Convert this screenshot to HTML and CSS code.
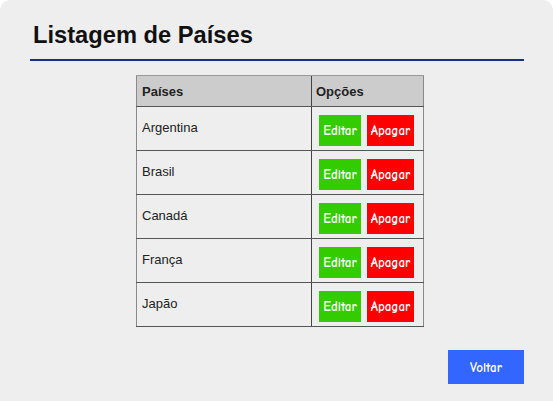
FILE: index.html
```html
<!DOCTYPE html>
<html lang="pt">
<head>
<meta charset="utf-8">
<title>Listagem de Países</title>
<link rel="stylesheet" href="styles.css">
</head>
<body>
<div class="page">
  <h1 class="title">Listagem de Países</h1>
  <table class="list">
    <thead>
      <tr><th class="c-name">Países</th><th class="c-opt">Opções</th></tr>
    </thead>
    <tbody>
      <tr><td class="c-name">Argentina</td><td class="c-opt"><button class="btn edit">Editar</button><button class="btn del">Apagar</button></td></tr>
      <tr><td class="c-name">Brasil</td><td class="c-opt"><button class="btn edit">Editar</button><button class="btn del">Apagar</button></td></tr>
      <tr><td class="c-name">Canadá</td><td class="c-opt"><button class="btn edit">Editar</button><button class="btn del">Apagar</button></td></tr>
      <tr><td class="c-name">França</td><td class="c-opt"><button class="btn edit">Editar</button><button class="btn del">Apagar</button></td></tr>
      <tr><td class="c-name">Japão</td><td class="c-opt"><button class="btn edit">Editar</button><button class="btn del">Apagar</button></td></tr>
    </tbody>
  </table>
  <div class="actions"><button class="btn back">Voltar</button></div>
</div>
</body>
</html>
```

FILE: styles.css
```css
html, body {
  margin: 0;
  padding: 0;
  background: #ffffff;
}
.page {
  width: 553px;
  min-height: 420px;
  box-sizing: border-box;
  background: #eeeeee;
  border-radius: 10px;
  padding: 21px 29px 0 30px;
  font-family: "Liberation Sans", Arial, sans-serif;
}
.title {
  margin: 0;
  font-size: 23.7px;
  font-weight: bold;
  color: #111;
  padding: 0 0 10px 3px;
  line-height: 28px;
  border-bottom: 2px solid #1b2f82;
}
.list {
  margin: 14px 0 0 106px;
  border-collapse: collapse;
  font-size: 13px;
  color: #222;
  border-left: 1px solid #8a8a8a;
  border-right: 1px solid #8a8a8a;
}
.list th {
  background: #cccccc;
  font-weight: bold;
  text-align: left;
  height: 30px;
  padding: 0 0 0 5px;
  border-top: 1px solid #999;
  border-bottom: 1px solid #555;
}
.list th.c-opt {
  padding-left: 4px;
}
.list td {
  border-bottom: 1px solid #555;
  padding: 0;
}
.list .c-name {
  width: 169px;
}
.list td.c-name {
  padding: 0 0 3px 5px;
  vertical-align: middle;
  height: 40px;
}
.list .c-opt {
  width: 104px;
  border-left: 1px solid #444;
}
.list td.c-opt {
  padding: 8px 0 4px 7px;
  vertical-align: top;
  white-space: nowrap;
}
.btn {
  border: 0;
  margin: 0;
  color: #fff;
  font-family: "Comic Sans MS", "Comic Neue", cursive;
  font-size: 13px;
  font-weight: bold;
  height: 31px;
  padding: 0;
  cursor: pointer;
  vertical-align: top;
}
.edit {
  width: 42px;
  background: #33cc00;
  margin-right: 6px;
}
.del {
  width: 47px;
  background: #ff0000;
}
.actions {
  display: flex;
  justify-content: flex-end;
  margin-top: 23px;
}
.back {
  width: 76px;
  height: 34px;
  background: #3366ff;
}
```
